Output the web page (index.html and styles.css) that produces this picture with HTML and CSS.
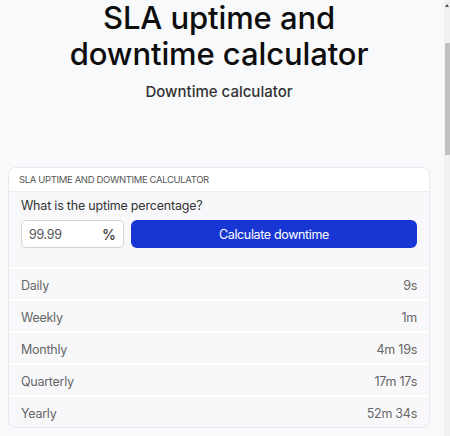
FILE: index.html
```html
<!DOCTYPE html>
<html lang="en">
<head>
<meta charset="utf-8">
<title>SLA uptime and downtime calculator</title>
<link rel="stylesheet" href="styles.css">
</head>
<body>
<main class="page">
  <h1 class="title">SLA uptime and<br>downtime calculator</h1>
  <p class="subtitle">Downtime calculator</p>
  <section class="card">
    <header class="card-head">SLA uptime and downtime calculator</header>
    <div class="form">
      <label class="question" for="pct">What is the uptime percentage?</label>
      <div class="controls">
        <div class="field">
          <input id="pct" class="field-input" type="text" value="99.99">
          <span class="field-unit">%</span>
        </div>
        <button class="btn" type="button">Calculate downtime</button>
      </div>
    </div>
    <ul class="results">
      <li class="row"><span>Daily</span><span>9s</span></li>
      <li class="row"><span>Weekly</span><span>1m</span></li>
      <li class="row"><span>Monthly</span><span>4m 19s</span></li>
      <li class="row"><span>Quarterly</span><span>17m 17s</span></li>
      <li class="row"><span>Yearly</span><span>52m 34s</span></li>
    </ul>
  </section>
</main>
<div class="scrollbar"><span class="scroll-arrow"></span><span class="scroll-thumb"></span></div>
</body>
</html>
```
FILE: styles.css
```css
* { box-sizing: border-box; }
html, body { margin: 0; padding: 0; }
body {
  background: #f8f9fb;
  font-family: Inter, "Noto Sans", sans-serif;
  color: #111;
  width: 450px;
  height: 436px;
  overflow: hidden;
}
.page {
  width: 422px;
  margin-left: 8px;
  display: flex;
  flex-direction: column;
  align-items: center;
}
.title {
  margin: 0;
  font-size: 31px;
  line-height: 36px;
  font-weight: 500;
  text-align: center;
  letter-spacing: -0.1px;
  color: #0d0d0d;
}
.subtitle {
  margin: 10px 0 0;
  font-size: 15px;
  line-height: 20px;
  font-weight: 500;
  color: #333;
}
.card {
  align-self: stretch;
  margin-top: 65px;
  border: 1px solid #e7e8ee;
  border-radius: 8px;
  background: #f8f8fb;
  overflow: hidden;
}
.card-head {
  background: #fff;
  border-bottom: 1px solid #ececf1;
  height: 24px;
  line-height: 23px;
  padding-left: 10px;
  font-size: 9.5px;
  text-transform: uppercase;
  letter-spacing: -0.35px;
  color: #555;
}
.form {
  padding: 4px 12px 19px;
  display: flex;
  flex-direction: column;
  gap: 4px;
}
.question {
  font-size: 12.5px;
  line-height: 20px;
  letter-spacing: -0.2px;
  color: #333;
}
.controls {
  display: flex;
  gap: 7px;
}
.field {
  width: 103px;
  height: 28px;
  background: #fff;
  border: 1px solid #d4d4d8;
  border-radius: 5px;
  display: flex;
  align-items: center;
  padding: 0 7px;
}
.field-input {
  flex: 1;
  min-width: 0;
  border: 0;
  outline: 0;
  padding: 0;
  font: 400 12.5px Inter, sans-serif;
  letter-spacing: -0.3px;
  color: #555;
  background: transparent;
}
.field-unit {
  font-size: 14px;
  font-weight: 500;
  color: #333;
}
.btn {
  flex: 1;
  height: 28px;
  border: 0;
  border-radius: 6px;
  background: #1836d4;
  color: #fff;
  font: 400 12.5px Inter, sans-serif;
  letter-spacing: -0.35px;
}
.results {
  list-style: none;
  margin: 0;
  padding: 0;
}
.row {
  display: flex;
  justify-content: space-between;
  align-items: center;
  height: 32px;
  padding: 2px 12px 0;
  border-top: 2px solid #fff;
  font-size: 12.5px;
  letter-spacing: -0.25px;
  color: #666;
}
.scrollbar {
  position: fixed;
  top: 0;
  right: 0;
  width: 6px;
  height: 436px;
  background: #f1f1f1;
}
.scroll-arrow {
  position: absolute;
  top: 4px;
  left: 1px;
  width: 0;
  height: 0;
  border-left: 2px solid transparent;
  border-right: 2px solid transparent;
  border-bottom: 3px solid #505050;
}
.scroll-thumb {
  position: absolute;
  top: 43px;
  left: 1px;
  width: 5px;
  height: 112px;
  background: #c1c1c1;
}
```
